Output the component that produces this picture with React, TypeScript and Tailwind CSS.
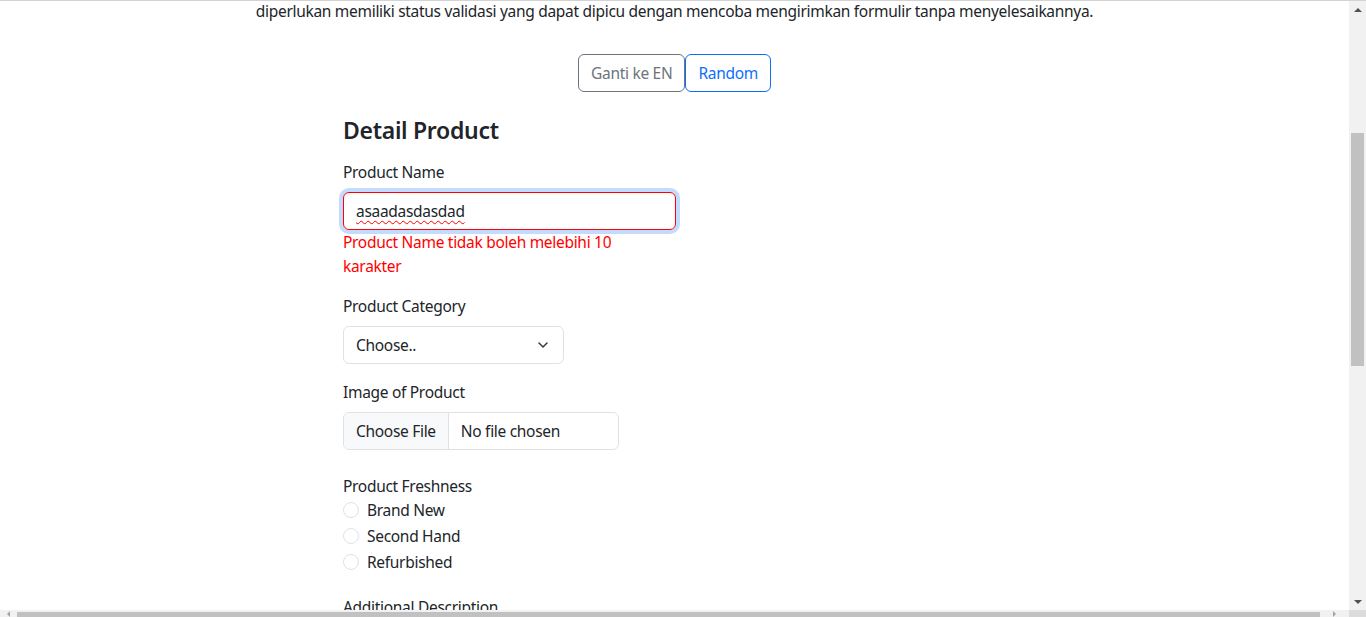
import { ChevronDown } from "lucide-react";

const freshness = ["Brand New", "Second Hand", "Refurbished"];

function Label({ children }: { children: React.ReactNode }) {
  return <div className="h-6 leading-6">{children}</div>;
}

function VerticalScrollbar() {
  return (
    <div className="flex w-[17px] flex-col bg-[#f1f1f1]">
      <div className="flex h-[17px] items-center justify-center">
        <div className="h-0 w-0 border-x-[4px] border-b-[4px] border-x-transparent border-b-[#505050]" />
      </div>
      <div className="flex flex-1 flex-col px-[2px]">
        <div className="h-[115px]" />
        <div className="h-[233px] bg-[#c1c1c1]" />
      </div>
      <div className="flex h-[17px] items-center justify-center">
        <div className="h-0 w-0 border-x-[4px] border-t-[4px] border-x-transparent border-t-[#505050]" />
      </div>
    </div>
  );
}

function HorizontalScrollbar() {
  return (
    <div className="flex h-[7px] bg-[#f1f1f1]">
      <div className="flex w-[17px] items-end justify-center">
        <div className="h-0 w-0 border-y-[3px] border-r-[3px] border-y-transparent border-r-[#a3a3a3]" />
      </div>
      <div className="flex-1 pt-[2px]">
        <div className="h-full bg-[#c1c1c1]" />
      </div>
      <div className="flex w-[29px] items-end justify-center">
        <div className="h-0 w-0 border-y-[3px] border-l-[3px] border-y-transparent border-l-[#a3a3a3]" />
      </div>
      <div className="w-[17px] bg-[#dcdcdc]" />
    </div>
  );
}

export default function App() {
  return (
    <div className="flex h-[617px] w-[1366px] flex-col overflow-hidden border-t border-[#d3d3d3] bg-white font-['Noto_Sans',sans-serif] text-[15.5px] tracking-[-0.3px] text-[#212529]">
      <div className="flex min-h-0 flex-1">
        <main className="min-w-0 flex-1 overflow-hidden">
          <p className="-mt-[2px] h-6 text-center leading-6">
            diperlukan memiliki status validasi yang dapat dipicu dengan mencoba mengirimkan formulir tanpa menyelesaikannya.
          </p>

          <div className="mt-[31px] flex justify-center">
            <button
              type="button"
              className="h-[38px] rounded-md border border-[#6c757d] px-3 leading-6 text-[#6c757d]"
            >
              Ganti ke EN
            </button>
            <button
              type="button"
              className="h-[38px] rounded-md border border-[#0d6efd] px-3 leading-6 text-[#0d6efd]"
            >
              Random
            </button>
          </div>

          <form className="ml-[343px] mt-6 w-[333px]">
            <h4 className="h-[29px] text-[23px] font-semibold leading-[29px]">Detail Product</h4>

            <div className="mt-[15px]">
              <Label>Product Name</Label>
              <div className="mt-2 flex h-[38px] items-center rounded-md border border-[#ff0000] px-3 shadow-[0_0_0_4px_rgba(13,110,253,0.25)]">
                <span className="leading-6 underline decoration-[#ff0000] decoration-wavy decoration-1 underline-offset-[3px]">
                  asaadasdasdad
                </span>
              </div>
              <div className="max-w-[310px] leading-6 text-[#ff0000]">
                Product Name tidak boleh melebihi 10 karakter
              </div>
            </div>

            <div className="mt-4">
              <Label>Product Category</Label>
              <div className="mt-2 flex h-[38px] w-[221px] items-center justify-between rounded-md border border-[#dee2e6] pl-3 pr-3">
                <span className="leading-6">Choose..</span>
                <ChevronDown size={16} strokeWidth={2.2} className="text-[#343a40]" />
              </div>
            </div>

            <div className="mt-4">
              <Label>Image of Product</Label>
              <div className="mt-2 flex h-[38px] w-[276px] overflow-hidden rounded-md border border-[#dee2e6]">
                <div className="flex items-center border-r border-[#dee2e6] bg-[#f8f9fa] px-3 leading-6">
                  Choose File
                </div>
                <div className="flex items-center px-3 leading-6">No file chosen</div>
              </div>
            </div>

            <div className="mt-6">
              <Label>Product Freshness</Label>
              {freshness.map((item) => (
                <div key={item} className="mb-[2px] flex h-6 items-center">
                  <span className="h-4 w-4 rounded-full border border-[#dee2e6]" />
                  <span className="ml-2 leading-6">{item}</span>
                </div>
              ))}
            </div>

            <div className="mt-[21px]">
              <Label>Additional Description</Label>
            </div>
          </form>
        </main>
        <VerticalScrollbar />
      </div>
      <HorizontalScrollbar />
    </div>
  );
}
